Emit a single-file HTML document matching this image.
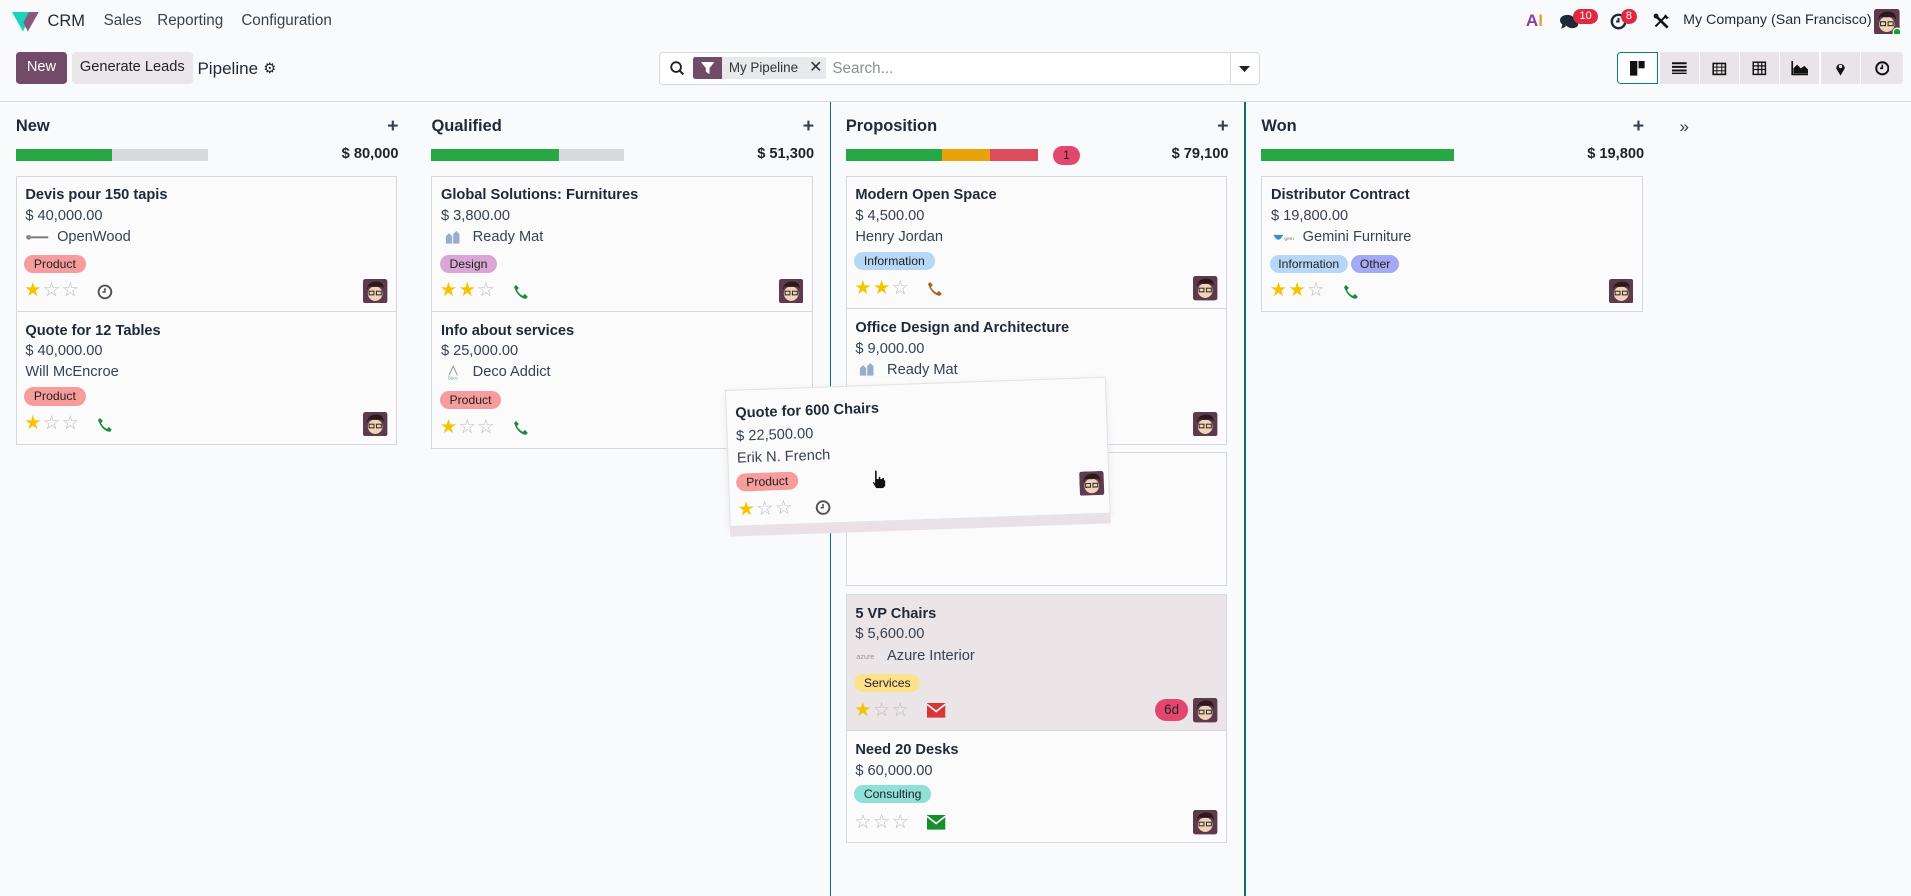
<!DOCTYPE html>
<html><head><meta charset="utf-8">
<style>
html,body{margin:0;padding:0;background:#f9fafb;overflow:hidden}
body{width:1911px;height:896px}
#w{zoom:1.21875;width:1568px;height:736px;position:relative;font-family:"Liberation Sans","DejaVu Sans",sans-serif;color:#212529;font-size:13px}
.a{position:absolute;white-space:nowrap}
.nav{font-size:12.5px;color:#374151}
.btn{position:absolute;top:43px;height:26px;border-radius:3px;line-height:26px;text-align:center;font-size:12px}
.vs{position:absolute;top:43px;height:26px;width:32px;background:#e9e4e7;border-left:1px solid #fff;display:flex;align-items:center;justify-content:center}
.col{position:absolute;top:96px;width:314px}
.ct{position:absolute;left:0;top:0;font-size:13.5px;font-weight:bold;color:#1f2937}
.plus{position:absolute;right:0;top:-2px;font-size:16px;font-weight:bold;color:#374151}
.bar{position:absolute;left:0;top:26px;height:10px;width:158px;background:#d8dadd;display:flex}
.amt{position:absolute;right:0;top:24px;font-size:12px;font-weight:bold}
.card{position:absolute;width:313px;background:#fbfbfc;border:1px solid #d6d8db;box-sizing:border-box}
.card .t{position:absolute;left:7px;top:9px;font-size:12px;font-weight:bold;color:#1f2937}
.card .m{position:absolute;left:7px;top:26px;font-size:12px;color:#374151}
.card .p{position:absolute;left:7px;font-size:12px;color:#374151;display:flex;align-items:center;gap:6px}
.tag{position:absolute;left:6px;height:15px;line-height:15px;border-radius:8px;padding:0 8px;font-size:10px;color:#222}
.tg{display:inline-block;height:15px;line-height:15px;border-radius:8px;padding:0 7px;font-size:10px;color:#222;margin-right:3px}
.st{position:absolute;left:6px;font-size:16px;line-height:16px;letter-spacing:1px}
.y{color:#f3c500}.e{color:#b9bcc0}
.ic{position:absolute}
.av{position:absolute;right:7px;width:20px;height:20px}
.logo{width:20px;height:12px;display:inline-block}
</style></head><body><div id="w">
<svg class="a" style="left:10px;top:10px" width="22" height="16" viewBox="0 0 22 16"><path d="M0 0h9l4 8-4 8z" fill="#1ad3bb"/><path d="M9 0h13l-9 16-4-8z" fill="#875a7b"/><path d="M4 0h10l-5 9z" fill="#1ad3bb"/></svg>
<div class="a nav" style="left:39px;top:10px;font-size:13.5px;color:#1f2937">CRM</div>
<div class="a nav" style="left:85px;top:10px">Sales</div>
<div class="a nav" style="left:129px;top:10px">Reporting</div>
<div class="a nav" style="left:198px;top:10px">Configuration</div>
<div class="a" style="left:1252px;top:9px;font-weight:bold;font-size:14px;color:#e8a03a"><span style="color:#8b3fa0">A</span>I</div>
<svg class="a" style="left:1280px;top:11px" width="16" height="14" viewBox="0 0 16 14"><ellipse cx="6" cy="6" rx="6" ry="4.5" fill="#1f2937"/><path d="M2 9l-1 4 4-2z" fill="#1f2937"/><ellipse cx="10" cy="9" rx="5" ry="3.5" fill="#1f2937"/></svg>
<div class="a" style="left:1291px;top:7px;background:#e0283e;color:#fff;font-size:9px;border-radius:8px;padding:0 5px;height:13px;line-height:13px">10</div>
<svg class="a" style="left:1321px;top:11px" width="14" height="14" viewBox="0 0 14 14"><circle cx="7" cy="7" r="5.5" fill="none" stroke="#1f2937" stroke-width="2"/><path d="M7 4v3h-2" stroke="#1f2937" stroke-width="1.6" fill="none"/></svg>
<div class="a" style="left:1330px;top:7px;background:#e0283e;color:#fff;font-size:9px;border-radius:8px;padding:0 4px;height:13px;line-height:13px">8</div>
<svg class="a" style="left:1356px;top:11px" width="14" height="14" viewBox="0 0 14 14"><path d="M3 3l9 9" stroke="#111" stroke-width="2.2"/><path d="M11 2L2 11" stroke="#111" stroke-width="1.6"/><circle cx="2.5" cy="2.5" r="2" fill="#111"/><path d="M10 1l3 3-2 1-2-2z" fill="#111"/></svg>
<div class="a nav" style="left:1381px;top:10px;font-size:11.7px;color:#1f2937">My Company (San Francisco)</div>
<svg class="a" style="left:1538px;top:7px" width="21" height="21" viewBox="0 0 20 20"><rect width="20" height="20" rx="2" fill="#5d3b4c"/><ellipse cx="10" cy="12" rx="6" ry="6" fill="#f2d3b8"/><path d="M3 9q1-7 8-7 6 0 6 6l-2-2q-5 1-10 0z" fill="#2a1a1a"/><rect x="5" y="10" width="4" height="3" fill="none" stroke="#222" stroke-width=".8"/><rect x="11" y="10" width="4" height="3" fill="none" stroke="#222" stroke-width=".8"/><circle cx="18" cy="18" r="3" fill="#12a12f" stroke="#fff" stroke-width="1"/></svg>

<div class="btn" style="left:13px;width:42px;background:#714b67;color:#fff">New</div>
<div class="btn" style="left:59px;width:99px;background:#ebe6e9;color:#222">Generate Leads</div>
<div class="a" style="left:162px;top:48px;font-size:14px;color:#1f2937">Pipeline</div>
<div class="a" style="left:216px;top:49px;font-size:12px">⚙</div>

<div class="a" style="left:541px;top:43px;width:491px;height:25px;border:1px solid #d6d8db;border-radius:3px;background:#fff"></div>
<svg class="a" style="left:550px;top:50px" width="12" height="12" viewBox="0 0 12 12"><circle cx="5" cy="5" r="4" fill="none" stroke="#222" stroke-width="1.5"/><path d="M8 8l3 3" stroke="#222" stroke-width="1.6"/></svg>
<div class="a" style="left:569px;top:47px;width:23px;height:18px;background:#714b67;border-radius:2px 0 0 2px"></div>
<svg class="a" style="left:575px;top:51px" width="11" height="10" viewBox="0 0 11 10"><path d="M0 0h11L7 5v5L4 8V5z" fill="#fff"/></svg>
<div class="a" style="left:592px;top:47px;width:86px;height:18px;background:#e7e9ed;font-size:11px;line-height:18px;padding-left:6px;box-sizing:border-box;color:#333">My Pipeline <span style="margin-left:6px;font-size:13px">✕</span></div>
<div class="a" style="left:683px;top:49px;font-size:12.5px;color:#8a9096">Search...</div>
<div class="a" style="left:1009px;top:44px;width:1px;height:24px;background:#d6d8db"></div>
<svg class="a" style="left:1017px;top:54px" width="9" height="5"><path d="M0 0h9L4.5 5z" fill="#222"/></svg>

<div class="vs" style="left:1327px;width:33px;background:#fff;border:1px solid #017e84;box-sizing:border-box;border-radius:3px 0 0 3px"><svg width="12" height="12"><rect x="0" y="0" width="6" height="12" fill="#111"/><rect x="7" y="0" width="5" height="6" fill="#111"/></svg></div>
<div class="vs" style="left:1361px"><svg width="12" height="10"><path d="M0 1h12M0 4h12M0 7h12M0 9.5h12" stroke="#111" stroke-width="1.6"/></svg></div>
<div class="vs" style="left:1394px"><svg width="12" height="12"><rect x="1" y="2" width="10" height="9" fill="none" stroke="#111" stroke-width="1.3"/><path d="M1 5h10M4 2v9M8 2v9M1 8h10" stroke="#111" stroke-width=".8"/></svg></div>
<div class="vs" style="left:1427px"><svg width="12" height="12"><rect x="1" y="1" width="10" height="10" fill="none" stroke="#111" stroke-width="1.2"/><path d="M1 4h10M1 7h10M5 1v10M8 1v10" stroke="#111" stroke-width="1"/></svg></div>
<div class="vs" style="left:1460px"><svg width="14" height="12"><path d="M1 0v11h13" stroke="#111" stroke-width="1.4" fill="none"/><path d="M2 10V6l3-3 3 3 3-2 3 3v3z" fill="#111"/></svg></div>
<div class="vs" style="left:1493px"><svg width="9" height="12"><path d="M4.5 12L1 6a3.5 3.5 0 1 1 7 0z" fill="#111"/><circle cx="4.5" cy="4.5" r="1.4" fill="#e9e4e7"/></svg></div>
<div class="vs" style="left:1526px;width:35px;border-radius:0 3px 3px 0"><svg width="12" height="12"><circle cx="6" cy="6" r="5" fill="none" stroke="#111" stroke-width="1.6"/><path d="M6 3v3H4" stroke="#111" stroke-width="1.3" fill="none"/></svg></div>

<div class="a" style="left:0;top:83px;width:1568px;height:1px;background:#d6d8db"></div>
<div class="a" style="left:681px;top:84px;width:1px;height:652px;background:#0b6f74"></div>
<div class="a" style="left:1021px;top:84px;width:1px;height:652px;background:#0b6f74"></div>

<!-- New -->
<div class="col" style="left:13px"><div class="ct">New</div><div class="plus">+</div><div class="bar"><div style="width:79px;background:#28a745"></div></div><div class="amt">$ 80,000</div></div>
<div class="card" style="left:13px;top:144px;height:112px">
<div class="t">Devis pour 150 tapis</div><div class="m">$ 40,000.00</div>
<div class="p" style="top:43px"><svg class="logo" viewBox="0 0 20 12"><path d="M1 6h18" stroke="#777" stroke-width="1.5"/><circle cx="3" cy="6" r="2" fill="#888"/></svg>OpenWood</div>
<div class="tag" style="top:64px;background:#f79c9c">Product</div>
<div class="st" style="top:86px"><span class="y">★</span><span class="e">☆☆</span></div>
<svg class="ic" style="left:66px;top:88px" width="13" height="13"><circle cx="6.5" cy="6.5" r="5.2" fill="none" stroke="#555" stroke-width="1.6"/><path d="M6.5 3.5v3h-2" stroke="#555" stroke-width="1.3" fill="none"/></svg>
<svg class="av" style="top:84px" viewBox="0 0 20 20"><rect width="20" height="20" rx="2" fill="#5d3b4c"/><ellipse cx="10" cy="12" rx="6" ry="6" fill="#f2d3b8"/><path d="M3 9q1-7 8-7 6 0 6 6l-2-2q-5 1-10 0z" fill="#2a1a1a"/><rect x="5" y="10" width="4" height="3" fill="none" stroke="#222" stroke-width=".8"/><rect x="11" y="10" width="4" height="3" fill="none" stroke="#222" stroke-width=".8"/></svg>
</div>
<div class="card" style="left:13px;top:255px;height:110px">
<div class="t">Quote for 12 Tables</div><div class="m">$ 40,000.00</div>
<div class="p" style="top:43px">Will McEncroe</div>
<div class="tag" style="top:62px;background:#f79c9c">Product</div>
<div class="st" style="top:84px"><span class="y">★</span><span class="e">☆☆</span></div>
<svg class="ic" style="left:66px;top:86px" width="13" height="13" viewBox="0 0 16 16"><path d="M3 1l3 3-2 2q2 4 6 6l2-2 3 3-2 2Q5 14 1 3z" fill="#1a8d3c"/></svg>
<svg class="av" style="top:82px" viewBox="0 0 20 20"><rect width="20" height="20" rx="2" fill="#5d3b4c"/><ellipse cx="10" cy="12" rx="6" ry="6" fill="#f2d3b8"/><path d="M3 9q1-7 8-7 6 0 6 6l-2-2q-5 1-10 0z" fill="#2a1a1a"/><rect x="5" y="10" width="4" height="3" fill="none" stroke="#222" stroke-width=".8"/><rect x="11" y="10" width="4" height="3" fill="none" stroke="#222" stroke-width=".8"/></svg>
</div>

<!-- Qualified -->
<div class="col" style="left:354px"><div class="ct">Qualified</div><div class="plus">+</div><div class="bar"><div style="width:105px;background:#28a745"></div></div><div class="amt">$ 51,300</div></div>
<div class="card" style="left:354px;top:144px;height:112px">
<div class="t">Global Solutions: Furnitures</div><div class="m">$ 3,800.00</div>
<div class="p" style="top:43px"><svg class="logo" viewBox="0 0 20 14"><path d="M3 13V6l3-3 3 3v7M10 13V4l3-3 3 3v9" fill="#9aaccc"/></svg>Ready Mat</div>
<div class="tag" style="top:64px;background:#d9a6d6">Design</div>
<div class="st" style="top:86px"><span class="y">★★</span><span class="e">☆</span></div>
<svg class="ic" style="left:66px;top:88px" width="13" height="13" viewBox="0 0 16 16"><path d="M3 1l3 3-2 2q2 4 6 6l2-2 3 3-2 2Q5 14 1 3z" fill="#1a8d3c"/></svg>
<svg class="av" style="top:84px" viewBox="0 0 20 20"><rect width="20" height="20" rx="2" fill="#5d3b4c"/><ellipse cx="10" cy="12" rx="6" ry="6" fill="#f2d3b8"/><path d="M3 9q1-7 8-7 6 0 6 6l-2-2q-5 1-10 0z" fill="#2a1a1a"/><rect x="5" y="10" width="4" height="3" fill="none" stroke="#222" stroke-width=".8"/><rect x="11" y="10" width="4" height="3" fill="none" stroke="#222" stroke-width=".8"/></svg>
</div>
<div class="card" style="left:354px;top:255px;height:113px">
<div class="t">Info about services</div><div class="m">$ 25,000.00</div>
<div class="p" style="top:43px"><svg class="logo" viewBox="0 0 20 14"><path d="M6 10l4-9 4 9" fill="none" stroke="#999"/><text x="5" y="14" font-size="4" fill="#3aa">Deco</text></svg>Deco Addict</div>
<div class="tag" style="top:65px;background:#f79c9c">Product</div>
<div class="st" style="top:87px"><span class="y">★</span><span class="e">☆☆</span></div>
<svg class="ic" style="left:66px;top:89px" width="13" height="13" viewBox="0 0 16 16"><path d="M3 1l3 3-2 2q2 4 6 6l2-2 3 3-2 2Q5 14 1 3z" fill="#1a8d3c"/></svg>
</div>

<!-- Proposition -->
<div class="col" style="left:694px"><div class="ct">Proposition</div><div class="plus">+</div><div class="bar"><div style="width:79px;background:#28a745"></div><div style="width:39px;background:#e8a30c"></div><div style="width:40px;background:#dc4c5c"></div></div>
<div class="a" style="left:170px;top:24px;background:#e5466f;color:#222;font-size:10px;border-radius:8px;width:22px;height:15px;line-height:15px;text-align:center">1</div><div class="amt">$ 79,100</div></div>
<div class="card" style="left:694px;top:144px;height:110px">
<div class="t">Modern Open Space</div><div class="m">$ 4,500.00</div>
<div class="p" style="top:43px">Henry Jordan</div>
<div class="tag" style="top:62px;background:#b7d7f6">Information</div>
<div class="st" style="top:84px"><span class="y">★★</span><span class="e">☆</span></div>
<svg class="ic" style="left:66px;top:86px" width="13" height="13" viewBox="0 0 16 16"><path d="M3 1l3 3-2 2q2 4 6 6l2-2 3 3-2 2Q5 14 1 3z" fill="#a8661a"/></svg>
<svg class="av" style="top:82px" viewBox="0 0 20 20"><rect width="20" height="20" rx="2" fill="#5d3b4c"/><ellipse cx="10" cy="12" rx="6" ry="6" fill="#f2d3b8"/><path d="M3 9q1-7 8-7 6 0 6 6l-2-2q-5 1-10 0z" fill="#2a1a1a"/><rect x="5" y="10" width="4" height="3" fill="none" stroke="#222" stroke-width=".8"/><rect x="11" y="10" width="4" height="3" fill="none" stroke="#222" stroke-width=".8"/></svg>
</div>
<div class="card" style="left:694px;top:253px;height:112px">
<div class="t">Office Design and Architecture</div><div class="m">$ 9,000.00</div>
<div class="p" style="top:43px"><svg class="logo" viewBox="0 0 20 14"><path d="M3 13V6l3-3 3 3v7M10 13V4l3-3 3 3v9" fill="#9aaccc"/></svg>Ready Mat</div>
<div class="tag" style="top:64px;background:#8ee0d8">&nbsp;&nbsp;&nbsp;&nbsp;&nbsp;&nbsp;</div>
<svg class="av" style="top:84px" viewBox="0 0 20 20"><rect width="20" height="20" rx="2" fill="#5d3b4c"/><ellipse cx="10" cy="12" rx="6" ry="6" fill="#f2d3b8"/><path d="M3 9q1-7 8-7 6 0 6 6l-2-2q-5 1-10 0z" fill="#2a1a1a"/><rect x="5" y="10" width="4" height="3" fill="none" stroke="#222" stroke-width=".8"/><rect x="11" y="10" width="4" height="3" fill="none" stroke="#222" stroke-width=".8"/></svg>
</div>
<div class="card" style="left:694px;top:371px;height:110px"></div>
<div class="card" style="left:694px;top:487px;height:113px;background:#ebe5e7">
<div class="t">5 VP Chairs</div><div class="m">$ 5,600.00</div>
<div class="p" style="top:44px"><svg class="logo" viewBox="0 0 20 12"><text x="1" y="8" font-size="6" fill="#999">azure</text></svg>Azure Interior</div>
<div class="tag" style="top:65px;background:#fce28a">Services</div>
<div class="st" style="top:87px"><span class="y">★</span><span class="e">☆☆</span></div>
<svg class="ic" style="left:66px;top:89px" width="15" height="12"><rect width="15" height="12" fill="#d6383a"/><path d="M0 1l7.5 6 7.5-6" stroke="#fff" stroke-width="1.3" fill="none"/></svg>
<div class="a" style="left:253px;top:86px;width:27px;height:18px;border-radius:9px;background:#e5466f;font-size:11px;line-height:18px;text-align:center">6d</div>
<svg class="av" style="top:85px" viewBox="0 0 20 20"><rect width="20" height="20" rx="2" fill="#5d3b4c"/><ellipse cx="10" cy="12" rx="6" ry="6" fill="#f2d3b8"/><path d="M3 9q1-7 8-7 6 0 6 6l-2-2q-5 1-10 0z" fill="#2a1a1a"/><rect x="5" y="10" width="4" height="3" fill="none" stroke="#222" stroke-width=".8"/><rect x="11" y="10" width="4" height="3" fill="none" stroke="#222" stroke-width=".8"/></svg>
</div>
<div class="card" style="left:694px;top:599px;height:93px">
<div class="t">Need 20 Desks</div><div class="m">$ 60,000.00</div>
<div class="tag" style="top:44px;background:#8ee0d8">Consulting</div>
<div class="st" style="top:67px"><span class="e">☆☆☆</span></div>
<svg class="ic" style="left:66px;top:69px" width="15" height="12"><rect width="15" height="12" fill="#1a8d2c"/><path d="M0 1l7.5 6 7.5-6" stroke="#fff" stroke-width="1.3" fill="none"/></svg>
<svg class="av" style="top:65px" viewBox="0 0 20 20"><rect width="20" height="20" rx="2" fill="#5d3b4c"/><ellipse cx="10" cy="12" rx="6" ry="6" fill="#f2d3b8"/><path d="M3 9q1-7 8-7 6 0 6 6l-2-2q-5 1-10 0z" fill="#2a1a1a"/><rect x="5" y="10" width="4" height="3" fill="none" stroke="#222" stroke-width=".8"/><rect x="11" y="10" width="4" height="3" fill="none" stroke="#222" stroke-width=".8"/></svg>
</div>

<!-- Won -->
<div class="col" style="left:1035px"><div class="ct">Won</div><div class="plus">+</div><div class="bar"><div style="width:158px;background:#28a745"></div></div><div class="amt">$ 19,800</div></div>
<div class="card" style="left:1035px;top:144px;height:112px">
<div class="t">Distributor Contract</div><div class="m">$ 19,800.00</div>
<div class="p" style="top:43px"><svg class="logo" viewBox="0 0 20 12"><path d="M2 4q4 8 8 0" fill="#3a8fd0"/><text x="11" y="8" font-size="4" fill="#777">gem</text></svg>Gemini Furniture</div>
<div style="position:absolute;left:6px;top:64px"><span class="tg" style="background:#b7d7f6">Information</span><span class="tg" style="background:#a3a9f5">Other</span></div>
<div class="st" style="top:86px"><span class="y">★★</span><span class="e">☆</span></div>
<svg class="ic" style="left:66px;top:88px" width="13" height="13" viewBox="0 0 16 16"><path d="M3 1l3 3-2 2q2 4 6 6l2-2 3 3-2 2Q5 14 1 3z" fill="#1a8d3c"/></svg>
<svg class="av" style="top:84px" viewBox="0 0 20 20"><rect width="20" height="20" rx="2" fill="#5d3b4c"/><ellipse cx="10" cy="12" rx="6" ry="6" fill="#f2d3b8"/><path d="M3 9q1-7 8-7 6 0 6 6l-2-2q-5 1-10 0z" fill="#2a1a1a"/><rect x="5" y="10" width="4" height="3" fill="none" stroke="#222" stroke-width=".8"/><rect x="11" y="10" width="4" height="3" fill="none" stroke="#222" stroke-width=".8"/></svg>
</div>
<div class="a" style="left:1378px;top:96px;font-size:14px;color:#333">»</div>

<!-- dragged -->
<div class="card" style="left:595px;top:320px;height:112px;width:313px;transform:rotate(-2deg);transform-origin:0 0;border-color:#e0e2e5;box-shadow:0 8px 0 #e9e1e5,0 2px 6px rgba(0,0,0,.08)">
<div class="t" style="top:12px">Quote for 600 Chairs</div><div class="m" style="top:31px">$ 22,500.00</div>
<div class="p" style="top:49px">Erik N. French</div>
<div class="tag" style="top:68px;background:#f79c9c">Product</div>
<div class="st" style="top:90px"><span class="y">★</span><span class="e">☆☆</span></div>
<svg class="ic" style="left:70px;top:92px" width="13" height="13"><circle cx="6.5" cy="6.5" r="5.2" fill="none" stroke="#555" stroke-width="1.6"/><path d="M6.5 3.5v3h-2" stroke="#555" stroke-width="1.3" fill="none"/></svg>
<svg class="av" style="top:76px;right:4px" viewBox="0 0 20 20"><rect width="20" height="20" rx="2" fill="#5d3b4c"/><ellipse cx="10" cy="12" rx="6" ry="6" fill="#f2d3b8"/><path d="M3 9q1-7 8-7 6 0 6 6l-2-2q-5 1-10 0z" fill="#2a1a1a"/><rect x="5" y="10" width="4" height="3" fill="none" stroke="#222" stroke-width=".8"/><rect x="11" y="10" width="4" height="3" fill="none" stroke="#222" stroke-width=".8"/></svg>
</div>
<svg class="a" style="left:715px;top:385px" width="13" height="16" viewBox="0 0 13 16"><path d="M3 1h2v7h1V6h2v2h1V7h2v2h1v5l-2 2H4L1 11l1-1 1 1z" fill="#111" stroke="#fff" stroke-width=".7"/></svg>
</div></body></html>
